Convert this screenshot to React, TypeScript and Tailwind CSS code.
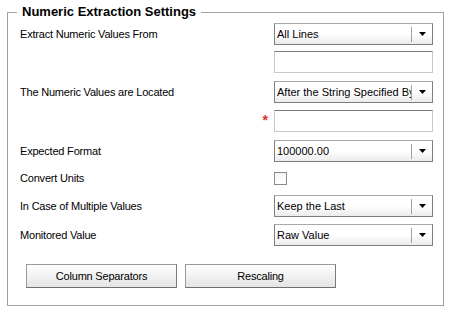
import React from "react";

const font = { fontFamily: "'Liberation Sans', Arial, sans-serif" };

function Select({ value }: { value: string }) {
  return (
    <div className="flex h-[22px] w-[159px] items-center border border-[#7f7f7f] border-t-[#a8a8a8] bg-gradient-to-b from-white from-50% to-[#ebebeb]">
      <span className="flex-1 overflow-hidden whitespace-nowrap pl-[2px] text-[11px] text-black">
        {value}
      </span>
      <span className="h-[15px] w-px bg-[#a0a0a0]" />
      <span className="flex w-[20px] items-center justify-center">
        <svg width="7" height="4" viewBox="0 0 7 4">
          <path d="M0 0h7L3.5 4z" fill="#000" />
        </svg>
      </span>
    </div>
  );
}

function TextBox() {
  return (
    <div className="h-[22px] w-[159px] border border-[#c8c8c8] border-t-[#7a7a7a] bg-white" />
  );
}

function Row({
  label,
  top,
  children,
}: {
  label?: string;
  top: string;
  children: React.ReactNode;
}) {
  return (
    <div className={`flex h-[22px] items-center ${top}`}>
      <div className="flex-1 pl-[12px] text-[11px] tracking-[-0.2px] text-black">{label}</div>
      {children}
    </div>
  );
}

function Button({ label }: { label: string }) {
  return (
    <button
      type="button"
      className="h-[24px] w-[151px] border border-[#9a9a9a] border-b-[#6e6e6e] border-r-[#7a7a7a] bg-gradient-to-b from-white to-[#e4e4e4] text-[11px] tracking-[-0.2px] text-black"
    >
      {label}
    </button>
  );
}

export default function App() {
  return (
    <div className="h-[313px] w-[449px] bg-white pt-[4px]" style={font}>
      <fieldset className="ml-[7px] h-[302px] w-[437px] border border-[#a0a0a0] pr-[10px]">
        <legend className="ml-[9px] px-[5px] text-[13px] font-bold leading-[16px] text-black">
          Numeric Extraction Settings
        </legend>
        <Row label="Extract Numeric Values From" top="mt-[3px]">
          <Select value="All Lines" />
        </Row>
        <Row top="mt-[6px]">
          <TextBox />
        </Row>
        <Row label="The Numeric Values are Located" top="mt-[8px]">
          <Select value="After the String Specified By" />
        </Row>
        <Row top="mt-[7px]">
          <span className="mb-[2px] mr-[6px] text-[14px] font-bold leading-none text-[#e03030]">*</span>
          <TextBox />
        </Row>
        <Row label="Expected Format" top="mt-[8px]">
          <Select value="100000.00" />
        </Row>
        <Row label="Convert Units" top="mt-[5px]">
          <div className="w-[159px]">
            <div className="h-[13px] w-[13px] border border-[#8a8a8a] bg-gradient-to-b from-[#f6f6f6] to-white" />
          </div>
        </Row>
        <Row label="In Case of Multiple Values" top="mt-[6px]">
          <Select value="Keep the Last" />
        </Row>
        <Row label="Monitored Value" top="mt-[7px]">
          <Select value="Raw Value" />
        </Row>
        <div className="mt-[18px] flex gap-[8px] pl-[18px]">
          <Button label="Column Separators" />
          <Button label="Rescaling" />
        </div>
      </fieldset>
    </div>
  );
}
